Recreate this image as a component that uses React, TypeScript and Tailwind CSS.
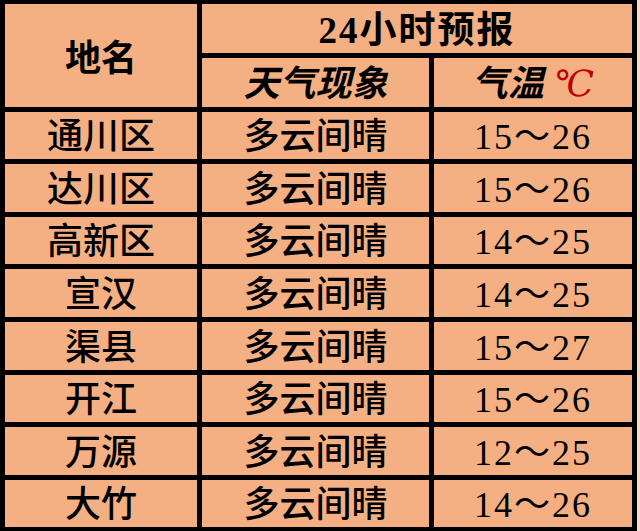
import React from 'react';

interface Row {
  name: string;
  weather: string;
  temp: string;
}

const rows: Row[] = [
  { name: '通川区', weather: '多云间晴', temp: '15～26' },
  { name: '达川区', weather: '多云间晴', temp: '15～26' },
  { name: '高新区', weather: '多云间晴', temp: '14～25' },
  { name: '宣汉', weather: '多云间晴', temp: '14～25' },
  { name: '渠县', weather: '多云间晴', temp: '15～27' },
  { name: '开江', weather: '多云间晴', temp: '15～26' },
  { name: '万源', weather: '多云间晴', temp: '12～25' },
  { name: '大竹', weather: '多云间晴', temp: '14～26' },
];

const cell = 'flex items-center justify-center bg-[#F4B083] text-black leading-none';

export default function App() {
  return (
    <div className="h-[531px] w-[640px] bg-[#f6dcc8] font-['Liberation_Serif','Noto_Sans_CJK_SC',serif]">
      <div className="grid w-[637px] grid-cols-[192px_227px_198px] grid-rows-[49px_49px_47px_48px_47px_48px_48px_47px_48px_47px] gap-[5px] bg-black pt-[4px] pb-[4px] pl-[5px] pr-[5px]">
        {/* header */}
        <div className={`${cell} row-span-2 pt-[6px] text-[36px] font-bold`}>地名</div>
        <div className={`${cell} col-span-2 pt-[3px] text-[37px] font-bold tracking-[2px]`}>24小时预报</div>
        <div className={`${cell} pt-[2px] text-[36px] font-bold italic`}>天气现象</div>
        <div className={`${cell} pt-[2px] text-[36px] font-bold italic`}>
          气温
          <span className="ml-[10px] font-['DejaVu_Serif',serif] text-[36px] font-normal italic text-[#c00000]">℃</span>
        </div>

        {/* rows */}
        {rows.map((r) => (
          <React.Fragment key={r.name}>
            <div className={`${cell} pt-[3px] text-[36px] font-medium`}>{r.name}</div>
            <div className={`${cell} pt-[3px] text-[36px] font-medium`}>{r.weather}</div>
            <div className={`${cell} pt-[3px] text-[36px] tracking-[2px]`}>{r.temp}</div>
          </React.Fragment>
        ))}
      </div>
    </div>
  );
}
